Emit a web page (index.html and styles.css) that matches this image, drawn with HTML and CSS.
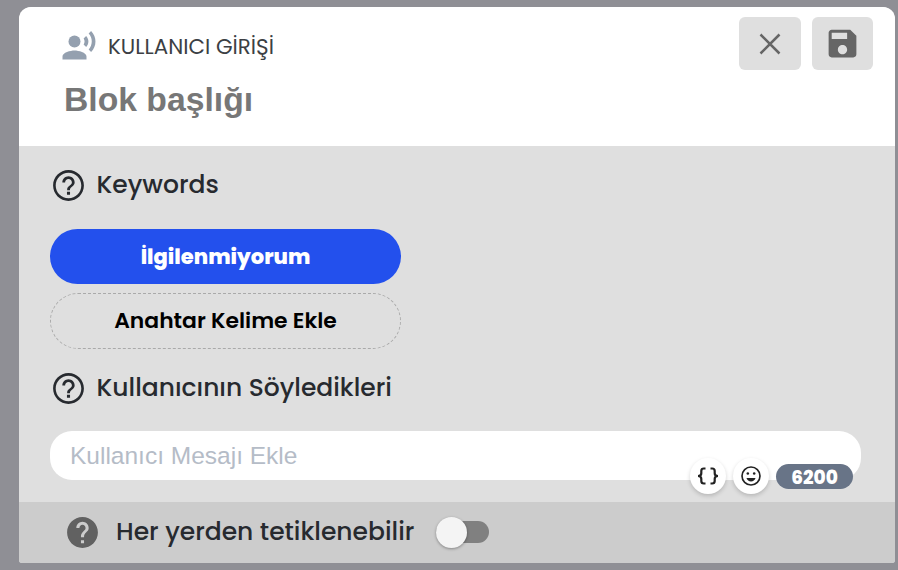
FILE: index.html
```html
<!DOCTYPE html>
<html lang="tr">
<head>
<meta charset="utf-8">
<title>Kullanıcı Girişi</title>
<link rel="stylesheet" href="styles.css">
</head>
<body>
<main class="panel">
  <header class="head">
    <div class="head-text">
      <div class="kind">
        <svg class="voice" viewBox="0 0 24 24"><circle cx="9" cy="9" r="4"/><path d="M9 15c-2.67 0-8 1.34-8 4v2h16v-2c0-2.66-5.33-4-8-4zm7.76-9.64l-1.68 1.69c.84 1.18.84 2.71 0 3.89l1.68 1.69c2.02-2.02 2.02-5.07 0-7.27zM20.07 2l-1.63 1.63c2.77 3.02 2.77 7.56 0 10.74L20.07 16c3.9-3.89 3.91-9.95 0-14z"/></svg>
        <span class="kind-label">KULLANICI GİRİŞİ</span>
      </div>
      <h1 class="title">Blok başlığı</h1>
    </div>
    <div class="actions">
      <button class="action" aria-label="Kapat"><svg class="close" viewBox="0 0 22 22"><path d="M1.500 1.500l19 19M20.500 1.500l-19 19"/></svg></button>
      <button class="action" aria-label="Kaydet"><svg class="save" viewBox="0 0 24 24"><path d="M17 3H5c-1.110 0-2 .9-2 2v14c0 1.100.890 2 2 2h14c1.100 0 2-.9 2-2V7l-4-4zm-5 16c-1.660 0-3-1.340-3-3s1.340-3 3-3 3 1.340 3 3-1.340 3-3 3zm3-10H5V5h10v4z"/></svg></button>
    </div>
  </header>
  <section class="body">
    <h2 class="heading">
      <svg class="help" viewBox="0 0 24 24"><path d="M11 18h2v-2h-2v2zm1-16C6.480 2 2 6.480 2 12s4.480 10 10 10 10-4.480 10-10S17.520 2 12 2zm0 18.300c-4.570 0-8.300-3.730-8.300-8.300S7.430 3.700 12 3.700s8.300 3.730 8.300 8.300-3.730 8.300-8.300 8.300zM12 6c-2.210 0-4 1.790-4 4h1.800c0-1.200 1-2.200 2.200-2.200s2.200 1 2.200 2.200c0 2-3.100 1.750-3.100 5h1.800c0-2.250 3.100-2.500 3.100-5 0-2.210-1.790-4-4-4z"/></svg>
      <span>Keywords</span>
    </h2>
    <div class="keys">
      <button class="key key-on">İlgilenmiyorum</button>
      <button class="key key-add">Anahtar Kelime Ekle</button>
    </div>
    <h2 class="heading">
      <svg class="help" viewBox="0 0 24 24"><path d="M11 18h2v-2h-2v2zm1-16C6.480 2 2 6.480 2 12s4.480 10 10 10 10-4.480 10-10S17.520 2 12 2zm0 18.300c-4.570 0-8.300-3.730-8.300-8.300S7.430 3.700 12 3.700s8.300 3.730 8.300 8.300-3.730 8.300-8.300 8.300zM12 6c-2.210 0-4 1.790-4 4h1.800c0-1.200 1-2.200 2.200-2.200s2.200 1 2.200 2.200c0 2-3.100 1.750-3.100 5h1.800c0-2.250 3.100-2.500 3.100-5 0-2.210-1.790-4-4-4z"/></svg>
      <span>Kullanıcının Söyledikleri</span>
    </h2>
    <div class="field">
      <span class="placeholder">Kullanıcı Mesajı Ekle</span>
      <div class="tools">
        <span class="tool"><svg class="braces" viewBox="0 0 22 18"><path d="M8.500 1.500H6.800Q4.300 1.500 4.300 4V6.200Q4.300 9 1 9Q4.300 9 4.300 11.800V14Q4.300 16.500 6.800 16.500H8.500M13.500 1.500H15.200Q17.700 1.500 17.700 4V6.200Q17.700 9 21 9Q17.700 9 17.700 11.800V14Q17.700 16.500 15.200 16.500H13.500"/></svg></span>
        <span class="tool"><svg class="smile" viewBox="0 0 22 22"><circle class="ring" cx="11" cy="11" r="9.900"/><circle cx="7.500" cy="8.300" r="1.400"/><circle cx="14.500" cy="8.300" r="1.400"/><path d="M6 13.200h10c-.8 2.400-2.700 3.900-5 3.900s-4.200-1.500-5-3.900z"/></svg></span>
        <span class="count">6200</span>
      </div>
    </div>
  </section>
  <footer class="foot">
    <svg class="help help-solid" viewBox="0 0 24 24"><path d="M12 2C6.480 2 2 6.480 2 12s4.480 10 10 10 10-4.480 10-10S17.520 2 12 2zm1 17h-2v-2h2v2zm2.070-7.750l-.9.920C13.450 12.900 13 13.500 13 15h-2v-.5c0-1.100.450-2.100 1.170-2.830l1.240-1.260c.370-.360.590-.860.590-1.410 0-1.100-.9-2-2-2s-2 .9-2 2H8c0-2.210 1.790-4 4-4s4 1.790 4 4c0 .880-.360 1.680-.930 2.250z"/></svg>
    <span class="anywhere">Her yerden tetiklenebilir</span>
    <span class="switch"></span>
  </footer>
</main>
</body>
</html>
```

FILE: styles.css
```css
* { box-sizing: border-box; }

body {
  margin: 0;
  height: 570px;
  overflow: hidden;
  padding: 7px 3px 0 19px;
  background: #8f8f95;
  color: #272a2f;
  font-family: Poppins, Inter, sans-serif;
}

h1, h2 { margin: 0; }

button {
  border: 0;
  padding: 0;
  font: inherit;
}

svg { display: block; flex: none; }
span { white-space: nowrap; }

.panel {
  width: 876px;
  height: 556px;
  display: flex;
  flex-direction: column;
  background: #dfdfdf;
  border-radius: 12px 12px 3px 3px;
  overflow: hidden;
}

.head {
  height: 139px;
  flex: none;
  display: flex;
  justify-content: space-between;
  padding: 10px 22px 0 42px;
  background: #fff;
}

.head-text { padding-top: 10px; }
.kind { display: flex; align-items: center; height: 38px; }
.voice { width: 36px; height: 36px; fill: #94a0af; }
.kind-label { margin-left: 11px; font-size: 21.400px; color: #3c3f44; }

.title {
  margin: 14px 0 0 3px;
  font: bold 33.700px/40px "Liberation Sans", sans-serif;
  color: #777;
}

.actions { display: flex; gap: 11px; }
.action {
  width: 61.500px;
  height: 53px;
  display: grid;
  place-items: center;
  border-radius: 6px;
  background: #dfdfdf;
}
.close { width: 22px; height: 22px; fill: none; stroke: #666; stroke-width: 2.500; }
.save { width: 37px; height: 37px; fill: #666; }

.body { height: 356px; flex: none; padding: 21px 33px 0 31px; }

.heading {
  display: flex;
  align-items: center;
  height: 36px;
  font-size: 25px;
  font-weight: 500;
}
.heading span { margin: -1px 0 0 9.500px; }
.help { width: 37px; height: 37px; fill: #272a2f; }

.keys { width: 351px; padding: 26px 0 21px; display: grid; gap: 9px; }
.key {
  height: 56px;
  border-radius: 28px;
  display: grid;
  place-items: center;
  padding-bottom: 1px;
  font-size: 21.900px;
}
.key-on { height: 55px; background: #2350ed; color: #fff; font-size: 21px; font-weight: 800; }
.key-add { background: transparent; border: 1px dashed #aaa; color: #000; font-weight: 600; }

.field {
  position: relative;
  width: 811px;
  height: 49px;
  margin-top: 25px;
  padding-left: 20px;
  border-radius: 22px;
  background: #fff;
}
.placeholder { font: 24.500px/49px "Liberation Sans", sans-serif; color: #b5bcc7; }

.tools {
  position: absolute;
  right: 8px;
  bottom: -14px;
  display: flex;
  align-items: center;
  gap: 7px;
}
.tool {
  width: 36px;
  height: 36px;
  display: grid;
  place-items: center;
  border-radius: 50%;
  background: #fff;
  box-shadow: 0 2px 4px rgba(0, 0, 0, .18);
}
.braces { width: 22px; height: 18px; fill: none; stroke: #222; stroke-width: 2.200; }
.smile { width: 20px; height: 20px; fill: #222; }
.smile .ring { fill: none; stroke: #222; stroke-width: 1.800; }
.count {
  width: 77px;
  height: 25px;
  display: grid;
  place-items: center;
  padding-bottom: 1px;
  border-radius: 13px;
  background: #687487;
  color: #fff;
  font-size: 18.500px;
  font-weight: 800;
}

.foot {
  flex: 1;
  display: flex;
  align-items: center;
  padding-left: 45px;
  background: #ccc;
  font-size: 25px;
  font-weight: 500;
}
.help-solid { fill: #616161; }
.anywhere { margin: -1px 0 0 15px; }

.switch {
  width: 53px;
  height: 22px;
  margin: -1px 0 0 22px;
  display: flex;
  align-items: center;
  border-radius: 11px;
  background: #808080;
}
.switch::before {
  content: "";
  width: 31px;
  height: 31px;
  border-radius: 50%;
  background: #f4f4f4;
  box-shadow: 0 1px 3px rgba(0, 0, 0, .35);
}
```
